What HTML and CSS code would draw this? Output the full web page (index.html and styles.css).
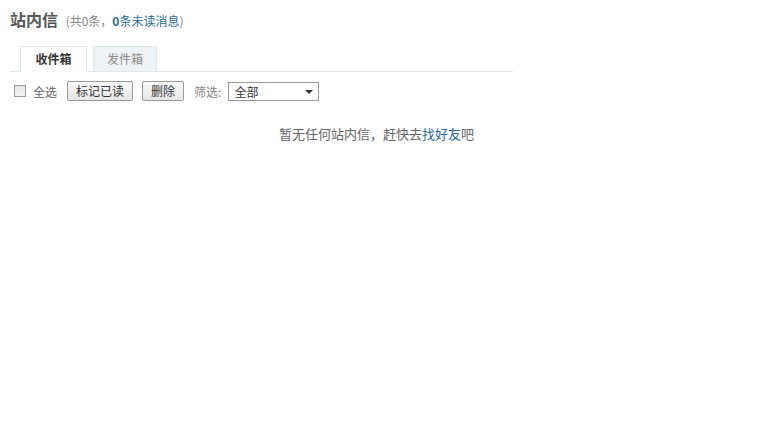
FILE: index.html
```html
<!DOCTYPE html>
<html lang="zh-CN">
<head>
    <meta charset="UTF-8">
    <title>站内信</title>
    <link rel="stylesheet" href="styles.css">
</head>
<body>
    <div class="page">
        <h2 class="title">站内信 <span class="count">(共0条，<a href="#" class="unread"><b>0</b>条未读消息</a>)</span></h2>

        <ul class="tabs">
            <li class="tab current">收件箱</li>
            <li class="tab">发件箱</li>
        </ul>

        <div class="toolbar">
            <label class="check"><span class="box"></span>全选</label>
            <button class="btn">标记已读</button>
            <button class="btn">删除</button>
            <span class="filter-label">筛选:</span>
            <div class="select">全部<span class="arrow"></span></div>
        </div>

        <p class="empty">暂无任何站内信，赶快去<a href="#">找好友</a>吧</p>
    </div>
</body>
</html>
```

FILE: styles.css
```css
body {
    margin: 0;
    background: #fff;
    font-family: "Noto Sans CJK SC", "Liberation Sans", sans-serif;
    font-size: 12px;
    color: #666;
}
a {
    color: #2b6b8f;
    text-decoration: none;
}
.page {
    padding: 8px 10px;
}
.title {
    margin: 0;
    font-size: 16px;
    font-weight: bold;
    color: #555;
    line-height: 22px;
}
.count {
    font-size: 12px;
    font-weight: normal;
    color: #888;
    margin-left: 4px;
}
.unread b {
    font-weight: bold;
}
.tabs {
    list-style: none;
    margin: 14px 0 0;
    padding: 0 0 0 10px;
    width: 493px;
    height: 25px;
    border-bottom: 1px solid #dce7ec;
    display: flex;
    gap: 6px;
}
.tab {
    width: 62px;
    height: 24px;
    line-height: 24px;
    text-align: center;
    border: 1px solid #dce5ea;
    border-bottom: none;
    background: #eef3f7;
    color: #888;
    font-size: 12px;
}
.tab.current {
    width: 65px;
    background: #fff;
    color: #333;
    font-weight: bold;
    height: 25px;
}
.toolbar {
    display: flex;
    align-items: center;
    margin-top: 8px;
    height: 22px;
}
.check {
    display: flex;
    align-items: center;
    margin-left: 4px;
    margin-right: 10px;
}
.box {
    box-sizing: border-box;
    width: 12px;
    height: 12px;
    border: 1px solid #999;
    background: linear-gradient(#e4e4e4, #f6f6f6);
    margin-right: 7px;
}
.btn {
    height: 20px;
    padding: 0 8px;
    margin-right: 9px;
    border: 1px solid #999;
    border-radius: 2px;
    background: linear-gradient(#fafafa, #e6e6e6);
    font-family: inherit;
    font-size: 12px;
    color: #333;
    line-height: 18px;
}
.filter-label {
    margin-left: 1px;
    margin-right: 7px;
    color: #888;
}
.select {
    position: relative;
    width: 84px;
    height: 17px;
    line-height: 17px;
    padding-left: 5px;
    border: 1px solid #999;
    color: #333;
}
.arrow {
    position: absolute;
    right: 5px;
    top: 7px;
    border-left: 4px solid transparent;
    border-right: 4px solid transparent;
    border-top: 4px solid #333;
}
.empty {
    margin: 22px 0 0;
    width: 733px;
    text-align: center;
    font-size: 13px;
    color: #666;
}
```
